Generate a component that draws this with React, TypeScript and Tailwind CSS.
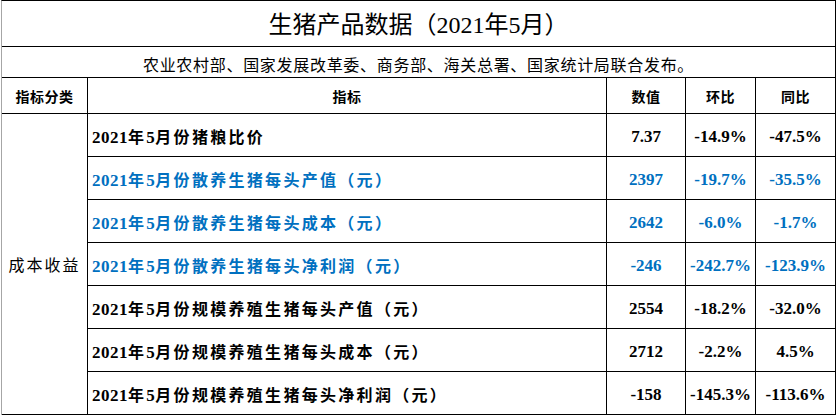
import React from 'react';

const rows = [
  { label: '2021年5月份猪粮比价', value: '7.37', mom: '-14.9%', yoy: '-47.5%', blue: false },
  { label: '2021年5月份散养生猪每头产值（元）', value: '2397', mom: '-19.7%', yoy: '-35.5%', blue: true },
  { label: '2021年5月份散养生猪每头成本（元）', value: '2642', mom: '-6.0%', yoy: '-1.7%', blue: true },
  { label: '2021年5月份散养生猪每头净利润（元）', value: '-246', mom: '-242.7%', yoy: '-123.9%', blue: true },
  { label: '2021年5月份规模养殖生猪每头产值（元）', value: '2554', mom: '-18.2%', yoy: '-32.0%', blue: false },
  { label: '2021年5月份规模养殖生猪每头成本（元）', value: '2712', mom: '-2.2%', yoy: '4.5%', blue: false },
  { label: '2021年5月份规模养殖生猪每头净利润（元）', value: '-158', mom: '-145.3%', yoy: '-113.6%', blue: false },
];

const serif = "font-['Liberation_Serif','Noto_Sans_CJK_SC',serif]";
const sans = "font-['Noto_Sans_CJK_SC',sans-serif]";

// digits and cjk get different sizes, like the spreadsheet render
function Label({ text }: { text: string }) {
  const parts = text.split(/([0-9.]+)/).filter((p) => p !== '');
  return (
    <span className="whitespace-nowrap">
      {parts.map((p, i) =>
        /^[0-9.]+$/.test(p) ?
        <span key={i} className={`${serif} text-[17px] tracking-[0.5px]`}>{p}</span> :
        <span key={i} className={`${sans} text-[16px] tracking-[2.3px]`}>{p}</span>
      )}
    </span>);
}

export default function App() {
  const cell = 'border-r border-b border-black flex items-center';
  return (
    <div className="w-[839px] h-[417px] bg-white">
      <div className="ml-px w-[835px] border-l border-t border-l-[#a6a6a6] border-t-black grid grid-cols-[86px_519px_79px_70px_80px] grid-rows-[46px_31px_36px_repeat(7,43px)] text-black">
        <div className={`${cell} col-span-5 justify-center pt-[3px] ${serif} text-[24px] leading-none`}>
          生猪产品数据（2021年5月）
        </div>
        <div className={`${cell} col-span-5 justify-center pt-1 ${sans} text-[16px] tracking-[0.7px] leading-none`}>
          农业农村部、国家发展改革委、商务部、海关总署、国家统计局联合发布。
        </div>

        <div className={`${cell} justify-center pt-[2px] ${sans} text-[14px] font-bold tracking-[0.5px]`}>指标分类</div>
        <div className={`${cell} justify-center pt-[2px] ${sans} text-[14px] font-bold tracking-[0.5px]`}>指标</div>
        <div className={`${cell} justify-center pt-[2px] ${sans} text-[14px] font-bold tracking-[0.5px]`}>数值</div>
        <div className={`${cell} justify-center pt-[2px] ${sans} text-[14px] font-bold tracking-[0.5px]`}>环比</div>
        <div className={`${cell} justify-center pt-[2px] ${sans} text-[14px] font-bold tracking-[0.5px]`}>同比</div>

        <div className={`${cell} row-span-7 justify-center ${sans} text-[16px] tracking-[2px]`}>成本收益</div>
        {rows.map((r) => {
          const color = r.blue ? 'text-[#0070c0]' : 'text-black';
          return (
            <React.Fragment key={r.label}>
              <div className={`${cell} pl-[4px] pt-1 font-bold ${color}`}>
                <Label text={r.label} />
              </div>
              <div className={`${cell} justify-center pt-1 ${serif} text-[17px] font-bold ${color}`}>{r.value}</div>
              <div className={`${cell} justify-center pt-1 ${serif} text-[17px] font-bold ${color}`}>{r.mom}</div>
              <div className={`${cell} justify-center pt-1 ${serif} text-[17px] font-bold ${color}`}>{r.yoy}</div>
            </React.Fragment>);
        })}
      </div>
    </div>);
}
